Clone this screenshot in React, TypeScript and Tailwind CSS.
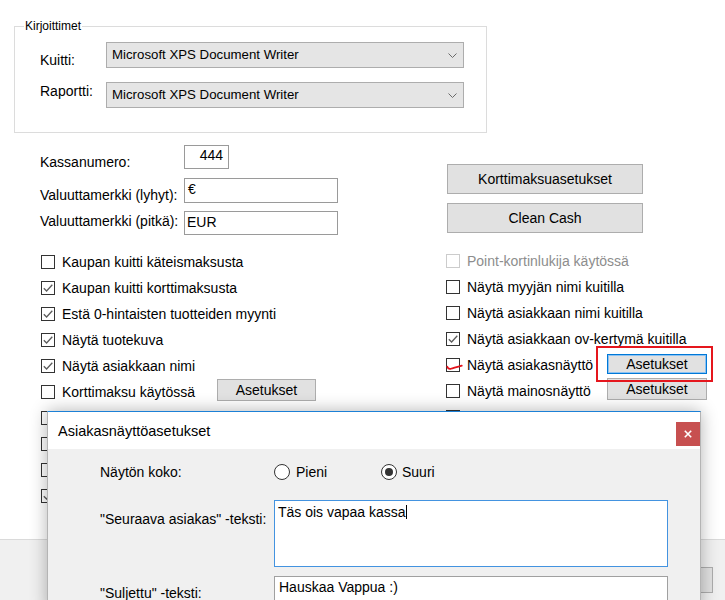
import React from 'react';

interface CheckProps {
  checked?: boolean;
  disabled?: boolean;
  scribble?: boolean;
}

function CheckBox(props: CheckProps) {
  const border = props.disabled ? 'border-[#cccccc]' : 'border-[#333333]';
  return (
    <span className={'relative block w-[14px] h-[14px] shrink-0 bg-white border ' + border}>
      {props.checked ? (
        <svg className="absolute left-0 top-0" width="12" height="12" viewBox="0 0 12 12">
          <path d="M1.8 6.2 L4.6 9 L10.3 2.8" fill="none" stroke="#5c5c5c" strokeWidth="1.3" />
        </svg>
      ) : null}
      {props.scribble ? (
        <svg className="absolute left-[-1px] top-[-1px] overflow-visible" width="18" height="16" viewBox="0 0 18 16">
          <path d="M1.2 8.6 C1.8 10.6 3 11.2 4.8 10.8 C7.5 10.1 10.5 9 15.8 7.6" fill="none" stroke="#e3121b" strokeWidth="1.7" strokeLinecap="round" />
        </svg>
      ) : null}
    </span>
  );
}

interface RowProps extends CheckProps {
  label?: string;
  labelWidth?: string;
  children?: React.ReactNode;
}

function CheckRow(props: RowProps) {
  return (
    <div className="flex items-center h-[26px]">
      <div className={'flex items-center ' + (props.labelWidth || '')}>
        <CheckBox checked={props.checked} disabled={props.disabled} scribble={props.scribble} />
        {props.label ? (
          <span className={'ml-[7px] whitespace-nowrap ' + (props.disabled ? 'text-[#8d8d8d]' : '')}>{props.label}</span>
        ) : null}
      </div>
      {props.children}
    </div>
  );
}

function Combo(props: { value: string }) {
  return (
    <div className="w-[358px] h-[26px] bg-[#e5e5e5] border border-[#adadad] flex items-center justify-between pl-[5px] pr-[6px]">
      <span className="text-[13.25px] whitespace-nowrap">{props.value}</span>
      <svg width="9" height="5" viewBox="0 0 9 5">
        <path d="M0.5 0.5 L4.5 4.5 L8.5 0.5" fill="none" stroke="#6a6a6a" strokeWidth="1" />
      </svg>
    </div>
  );
}

function Radio(props: { checked?: boolean }) {
  return (
    <span className="w-[16px] h-[16px] rounded-full border border-[#333333] bg-white flex items-center justify-center shrink-0">
      {props.checked ? <span className="w-[8px] h-[8px] rounded-full bg-[#333333]" /> : null}
    </span>
  );
}

export default function App() {
  return (
    <div className="relative w-[725px] h-[600px] overflow-hidden bg-white text-[14px] leading-[16px] text-black font-['Liberation_Sans',Arial,sans-serif]">
      <div className="h-[520px]">
        <fieldset className="ml-[14px] mt-[19px] w-[473px] border border-[#dcdcdc]">
          <legend className="ml-[9px] px-[1px] text-[12px] leading-[14px]">Kirjoittimet</legend>
          <div className="pl-[25px] pt-[9px] pb-[24px]">
            <div className="flex items-start">
              <span className="w-[66px] mt-[10px]">Kuitti:</span>
              <Combo value="Microsoft XPS Document Writer" />
            </div>
            <div className="flex items-start mt-[14px]">
              <span className="w-[66px] mt-[1px]">Raportti:</span>
              <Combo value="Microsoft XPS Document Writer" />
            </div>
          </div>
        </fieldset>

        <div className="flex mt-[12px] pl-[40px]">
          <div className="w-[406px] flex flex-col">
            <div className="flex items-start">
              <span className="w-[144px] mt-[9px] whitespace-nowrap">Kassanumero:</span>
              <div className="w-[45px] h-[24px] bg-white border border-[#9a9a9a] pr-[5px] pt-[1px] text-right">444</div>
            </div>
            <div className="flex items-start mt-[8px]">
              <span className="w-[144px] mt-[9px] whitespace-nowrap">Valuuttamerkki (lyhyt):</span>
              <div className="w-[154px] h-[25px] bg-white border border-[#9a9a9a] px-[3px] pt-[2px]">€</div>
            </div>
            <div className="flex items-start mt-[8px]">
              <span className="w-[144px] mt-[2px] whitespace-nowrap">Valuuttamerkki (pitkä):</span>
              <div className="w-[154px] h-[24px] bg-white border border-[#9a9a9a] px-[2px] pt-[2px]">EUR</div>
            </div>

            <div className="mt-[14px] pl-[1px]">
              <CheckRow label="Kaupan kuitti käteismaksusta" />
              <CheckRow label="Kaupan kuitti korttimaksusta" checked />
              <CheckRow label="Estä 0-hintaisten tuotteiden myynti" checked />
              <CheckRow label="Näytä tuotekuva" checked />
              <CheckRow label="Näytä asiakkaan nimi" checked />
              <CheckRow label="Korttimaksu käytössä" labelWidth="w-[176px]">
                <button type="button" className="self-start w-[99px] h-[22px] bg-[#e1e1e1] border border-[#adadad]">Asetukset</button>
              </CheckRow>
              <CheckRow />
              <CheckRow />
              <CheckRow />
              <CheckRow checked />
            </div>
          </div>

          <div className="flex flex-col pt-[19px]">
            <button type="button" className="ml-[1px] w-[196px] h-[30px] bg-[#e1e1e1] border border-[#adadad]">Korttimaksuasetukset</button>
            <button type="button" className="ml-[1px] mt-[9px] w-[196px] h-[30px] bg-[#e1e1e1] border border-[#adadad]">Clean Cash</button>
            <div className="mt-[15px]">
              <CheckRow label="Point-kortinlukija käytössä" disabled />
              <CheckRow label="Näytä myyjän nimi kuitilla" />
              <CheckRow label="Näytä asiakkaan nimi kuitilla" />
              <CheckRow label="Näytä asiakkaan ov-kertymä kuitilla" checked />
              <CheckRow label="Näytä asiakasnäyttö" scribble labelWidth="w-[161px]">
                <button type="button" className="self-start mt-[2px] w-[100px] h-[20px] bg-[#e1e1e1] border border-[#0078d7] shadow-[inset_0_0_0_1px_#8cc2f2]">Asetukset</button>
              </CheckRow>
              <CheckRow label="Näytä mainosnäyttö" labelWidth="w-[161px]">
                <button type="button" className="self-start w-[100px] h-[22px] bg-[#e1e1e1] border border-[#adadad]">Asetukset</button>
              </CheckRow>
              <CheckRow />
            </div>
          </div>
        </div>
      </div>

      <div className="h-[71px] bg-[#f0f0f0] border-t border-[#dadada] flex justify-end pr-[12px] pt-[27px]">
        <div className="w-[90px] h-[26px] bg-[#e1e1e1] border border-[#adadad]" />
      </div>
      <div className="h-[1px] bg-[#a3a3a3]" />
      <div className="h-[8px] bg-[#f4f4f4] flex justify-end pt-[3px]">
        <div className="w-[26px] h-[2px] bg-[#f2a283]" />
      </div>

      <div className="absolute left-[596px] top-[346px] w-[117px] h-[36px] border-2 border-[#e5161d]" />

      <div className="absolute left-[47px] top-[411px] w-[654px] h-[200px] bg-[#f0f0f0] border-t border-t-[#1c80d6] border-x border-x-[#b4b4b4] shadow-[0_0_16px_rgba(0,0,0,0.3)]">
        <div className="h-[37px] bg-white flex items-center justify-between pl-[10px]">
          <span className="text-[14.5px] leading-[18px]">Asiakasnäyttöasetukset</span>
          <div className="self-start mt-[10px] w-[24px] h-[24px] bg-[#c75050] flex items-center justify-center">
            <svg width="8" height="8" viewBox="0 0 8 8">
              <path d="M0.8 0.8 L7.2 7.2 M7.2 0.8 L0.8 7.2" stroke="#ffffff" strokeWidth="1.6" />
            </svg>
          </div>
        </div>
        <div className="pl-[52px]">
          <div className="flex items-center mt-[15px] h-[16px]">
            <span className="w-[174px]">Näytön koko:</span>
            <div className="flex items-center w-[107px]">
              <Radio />
              <span className="ml-[6px]">Pieni</span>
            </div>
            <div className="flex items-center">
              <Radio checked />
              <span className="ml-[5px]">Suuri</span>
            </div>
          </div>
          <div className="flex items-start mt-[20px]">
            <span className="w-[174px] mt-[11px] whitespace-nowrap">"Seuraava asiakas" -teksti:</span>
            <div className="w-[394px] h-[67px] bg-white border border-[#4393e0] px-[3px] pt-[3px]">
              Täs ois vapaa kassa<span className="inline-block w-[1px] h-[14px] bg-black align-[-2px]" />
            </div>
          </div>
          <div className="flex items-start mt-[9px]">
            <span className="w-[174px] mt-[9px] whitespace-nowrap">"Suljettu" -teksti:</span>
            <div className="w-[394px] h-[26px] bg-white border border-[#a0a0a0] px-[4px] pt-[2px]">Hauskaa Vappua :)</div>
          </div>
        </div>
      </div>
    </div>
  );
}
